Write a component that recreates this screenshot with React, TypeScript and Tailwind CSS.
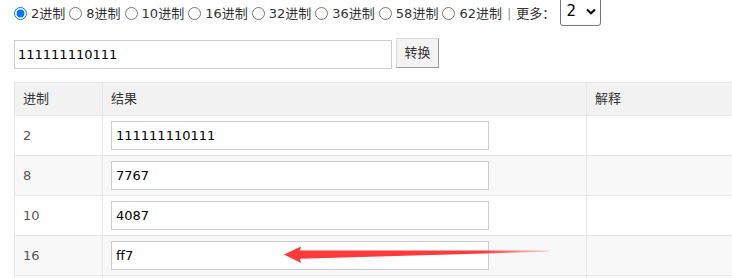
import { useState } from "react";

const bases = ["2", "8", "10", "16", "32", "36", "58", "62"];

const rows = [
  { base: "2", value: "111111110111" },
  { base: "8", value: "7767" },
  { base: "10", value: "4087" },
  { base: "16", value: "ff7" },
];

export default function App() {
  const [picked, setPicked] = useState("2");
  const [input, setInput] = useState("111111110111");

  return (
    <div className="relative h-[278px] w-[732px] overflow-hidden bg-white font-['DejaVu_Sans','Noto_Sans_CJK_SC',sans-serif] text-[13px] text-[#333]">
      {/* base picker */}
      <div className="flex h-[27px] items-center pl-[14px]">
        {bases.map((b, i) => (
          <label key={b} className={`flex items-center ${i > 0 ? "ml-[4px]" : ""}`}>
            <input
              type="radio"
              name="base"
              checked={picked === b}
              onChange={() => setPicked(b)}
              className="m-0 mr-[4px] h-[13px] w-[13px]"
            />
            <span>{b}进制</span>
          </label>
        ))}
        <span className="mx-[5px] text-[#999]">|</span>
        <span>更多：</span>
        <div className="-mt-[4px] ml-[5px] flex h-[30px] w-[41px] items-center justify-between self-start rounded-b-[3px] border border-[#767676] pr-[4px] pl-[5px] text-[15px] text-black">
          <span>2</span>
          <svg width="10" height="7" viewBox="0 0 10 7">
            <path d="M1 1.5 L5 5.2 L9 1.5" fill="none" stroke="#111" strokeWidth="2.2" />
          </svg>
        </div>
      </div>

      {/* input + convert */}
      <div className="mt-[11px] flex items-start gap-[4px] pl-[14px]">
        <input
          value={input}
          onChange={(e) => setInput(e.target.value)}
          className="mt-[2px] h-[29px] w-[378px] border border-[#ccc] px-[3px] text-[13px] text-black outline-none"
        />
        <button className="h-[30px] w-[43px] border border-[#ddd] border-r-[#999] border-b-[#999] bg-[#f3f3f3] text-[13px] text-[#333]">
          转换
        </button>
      </div>

      {/* results */}
      <table className="mt-[13px] ml-[14px] w-[740px] table-fixed border-collapse">
        <colgroup>
          <col className="w-[88px]" />
          <col className="w-[484px]" />
          <col />
        </colgroup>
        <thead>
          <tr className="h-[33px] bg-[#f2f2f2]">
            <th className="border border-[#e6e6e6] px-[8px] text-left font-normal text-[#333]">进制</th>
            <th className="border border-[#e6e6e6] px-[8px] text-left font-normal text-[#333]">结果</th>
            <th className="border border-[#e6e6e6] px-[8px] text-left font-normal text-[#333]">解释</th>
          </tr>
        </thead>
        <tbody>
          {rows.map((r, i) => (
            <tr key={r.base} className={`h-[40px] ${i % 2 ? "bg-[#f8f8f8]" : "bg-white"}`}>
              <td className="border border-[#e6e6e6] px-[8px] text-[#555]">{r.base}</td>
              <td className="border border-[#e6e6e6] px-[8px]">
                <input
                  readOnly
                  value={r.value}
                  className="block h-[29px] w-[378px] border border-[#ccc] bg-white px-[4px] text-[13px] text-black outline-none"
                />
              </td>
              <td className="border border-[#e6e6e6] px-[8px]" />
            </tr>
          ))}
          {/* next row, only its top edge shows */}
          <tr className="h-[40px] bg-white">
            <td className="border border-[#e6e6e6]" />
            <td className="border border-[#e6e6e6]" />
            <td className="border border-[#e6e6e6]" />
          </tr>
        </tbody>
      </table>

      {/* red annotation arrow */}
      <svg className="pointer-events-none absolute top-0 left-0" width="732" height="278" viewBox="0 0 732 278">
        <defs>
          <linearGradient id="fade" x1="284" y1="0" x2="549" y2="0" gradientUnits="userSpaceOnUse">
            <stop offset="0" stopColor="#fe3a3a" />
            <stop offset="0.75" stopColor="#fe3a3a" />
            <stop offset="1" stopColor="#fe3a3a" stopOpacity="0.25" />
          </linearGradient>
        </defs>
        <polygon
          points="284,254.5 301,246.5 300,250.5 549,250.6 549,251.6 300,258.8 301,263"
          fill="url(#fade)"
        />
      </svg>
    </div>
  );
}
